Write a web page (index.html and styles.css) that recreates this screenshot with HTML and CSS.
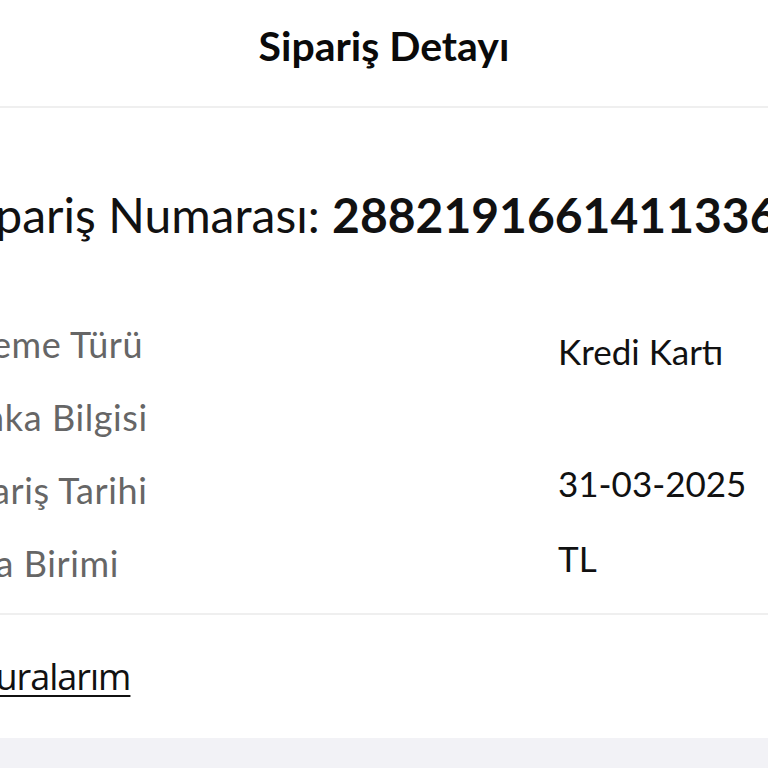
FILE: index.html
```html
<!DOCTYPE html>
<html lang="tr">
<head>
<meta charset="utf-8">
<title>Sipariş Detayı</title>
<link rel="stylesheet" href="styles.css">
</head>
<body>
<header class="topbar">
  <h1 class="title">Sipariş Detayı</h1>
</header>
<main class="page">
  <div class="inner">
    <h2 class="order-no">Sipariş Numarası: <strong>2882191661411336</strong></h2>
  </div>
  <div class="details">
    <div class="labels">
      <div class="label">Ödeme Türü</div>
      <div class="label">Banka Bilgisi</div>
      <div class="label">Sipariş Tarihi</div>
      <div class="label">Para Birimi</div>
    </div>
    <div class="values">
      <div class="value v1">Kredi Kartı</div>
      <div class="value v2"></div>
      <div class="value v3">31-03-2025</div>
      <div class="value v4">TL</div>
    </div>
  </div>
  <div class="divider"></div>
  <div class="links">
    <a class="link" href="#">Faturalarım</a>
  </div>
</main>
<footer class="band"></footer>
</body>
</html>
```

FILE: styles.css
```css
html, body {
  margin: 0;
  padding: 0;
  background: #ffffff;
  font-family: Lato, "Liberation Sans", sans-serif;
  color: #111111;
  overflow: hidden;
}

.topbar {
  height: 106px;
  border-bottom: 2px solid #efefef;
  display: flex;
  justify-content: center;
}

.title {
  margin: 22px 0 0;
  font-size: 41px;
  font-weight: 700;
  line-height: 48px;
  color: #0a0a0a;
}

.page {
  overflow: hidden;
}

.inner {
  margin-left: -42px;
}

.order-no {
  margin: 78px 0 0;
  font-size: 48px;
  font-weight: 400;
  line-height: 58px;
  white-space: nowrap;
  color: #111111;
}

.order-no strong {
  font-weight: 700;
}

.details {
  display: flex;
  margin-top: 64px;
  margin-left: -58px;
}

.labels {
  width: 616px;
  display: flex;
  flex-direction: column;
}

.label {
  font-size: 36px;
  letter-spacing: 0.6px;
  line-height: 73px;
  color: #666666;
  white-space: nowrap;
}

.values {
  display: flex;
  flex-direction: column;
}

.value {
  font-size: 35px;
  line-height: 66px;
  height: 66px;
  color: #111111;
  white-space: nowrap;
}

.v1 { margin-top: 10px; }
.v4 { margin-top: 9px; }

.divider {
  height: 2px;
  background: #efefef;
  margin-top: 13px;
}

.links {
  height: 123px;
  display: flex;
  align-items: center;
  margin-left: -53px;
}

.link {
  font-family: "Open Sans", sans-serif;
  font-size: 36px;
  color: #111111;
  text-decoration: underline;
  text-underline-offset: 5px;
  text-decoration-thickness: 2px;
  letter-spacing: -1px;
  white-space: nowrap;
}

.band {
  height: 40px;
  background: #f2f2f6;
}
```
